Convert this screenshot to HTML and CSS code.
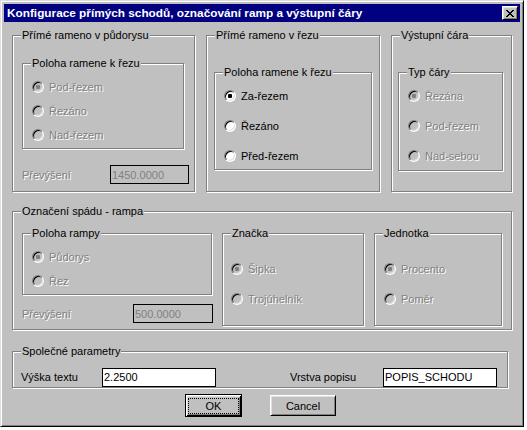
FILE: index.html
```html
<!DOCTYPE html>
<html lang="cs">
<head>
<meta charset="utf-8">
<title>Konfigurace přímých schodů</title>
<link rel="stylesheet" href="styles.css">
</head>
<body>
<div class="window">
  <div class="titlebar">
    <span class="title">Konfigurace přímých schodů, označování ramp a výstupní čáry</span>
    <span class="close">
      <svg width="8" height="7" viewBox="0 0 8 7" shape-rendering="crispEdges">
        <path fill="#000" d="M0 0h2v1h-2zM6 0h2v1h-2zM1 1h2v1h-2zM5 1h2v1h-2zM2 2h4v1h-4zM3 3h2v1h-2zM2 4h4v1h-4zM1 5h2v1h-2zM5 5h2v1h-2zM0 6h2v1h-2zM6 6h2v1h-2z"/>
      </svg>
    </span>
  </div>
  <div class="content">
    <div class="top-row">
      <div class="group g1">
        <span class="group-title">Přímé rameno v půdorysu</span>
        <div class="group sub sub1">
          <span class="group-title">Poloha ramene k řezu</span>
          <div class="radio-row disabled"><span class="radio checked"></span><span>Pod-řezem</span></div>
          <div class="radio-row disabled"><span class="radio"></span><span>Řezáno</span></div>
          <div class="radio-row disabled"><span class="radio"></span><span>Nad-řezem</span></div>
        </div>
        <div class="field-row f1">
          <span class="label disabled-text l1">Převýšení</span>
          <input class="edit edit-disabled e1" type="text" value="1450.0000" readonly>
        </div>
      </div>
      <div class="group g2">
        <span class="group-title">Přímé rameno v řezu</span>
        <div class="group sub sub2">
          <span class="group-title">Poloha ramene k řezu</span>
          <div class="radio-row"><span class="radio checked"></span><span>Za-řezem</span></div>
          <div class="radio-row"><span class="radio"></span><span>Řezáno</span></div>
          <div class="radio-row"><span class="radio"></span><span>Před-řezem</span></div>
        </div>
      </div>
      <div class="group g3">
        <span class="group-title">Výstupní čára</span>
        <div class="group sub sub3">
          <span class="group-title">Typ čáry</span>
          <div class="radio-row disabled"><span class="radio checked"></span><span>Řezána</span></div>
          <div class="radio-row disabled"><span class="radio"></span><span>Pod-řezem</span></div>
          <div class="radio-row disabled"><span class="radio"></span><span>Nad-sebou</span></div>
        </div>
      </div>
    </div>

    <div class="group g4">
      <span class="group-title">Označení spádu - rampa</span>
      <div class="col">
        <div class="group sub sub4">
          <span class="group-title">Poloha rampy</span>
          <div class="radio-row disabled"><span class="radio checked"></span><span>Půdorys</span></div>
          <div class="radio-row disabled"><span class="radio"></span><span>Řez</span></div>
        </div>
        <div class="field-row f2">
          <span class="label disabled-text l2">Převýšení</span>
          <input class="edit edit-disabled e2" type="text" value="500.0000" readonly>
        </div>
      </div>
      <div class="group sub sub5">
        <span class="group-title">Značka</span>
        <div class="radio-row disabled"><span class="radio checked"></span><span>Šipka</span></div>
        <div class="radio-row disabled"><span class="radio"></span><span>Trojúhelník</span></div>
      </div>
      <div class="group sub sub6">
        <span class="group-title">Jednotka</span>
        <div class="radio-row disabled"><span class="radio checked"></span><span>Procento</span></div>
        <div class="radio-row disabled"><span class="radio"></span><span>Poměr</span></div>
      </div>
    </div>

    <div class="group g5">
      <span class="group-title">Společné parametry</span>
      <span class="label l3">Výška textu</span>
      <input class="edit e3" type="text" value="2.2500">
      <span class="label l4">Vrstva popisu</span>
      <input class="edit e4" type="text" value="POPIS_SCHODU">
    </div>

    <div class="buttons">
      <button class="btn default" type="button"><span class="focus">OK</span></button>
      <button class="btn cancel" type="button">Cancel</button>
    </div>
  </div>
</div>
</body>
</html>
```
FILE: styles.css
```css
body {
  margin: 0;
  background: #fff;
  font-family: "Liberation Sans", Arial, sans-serif;
  font-size: 11px;
  color: #000;
}

.window {
  width: 524px;
  height: 427px;
  box-sizing: border-box;
  background: #c0c0c0;
  border: 1px solid;
  border-color: #dfdfdf #000 #000 #dfdfdf;
  box-shadow: inset 1px 1px 0 #fff, inset -1px -1px 0 #808080;
  padding: 3px;
  display: flex;
  flex-direction: column;
}

.titlebar {
  height: 18px;
  flex: none;
  box-sizing: border-box;
  background: #000080;
  color: #fff;
  display: flex;
  align-items: center;
  justify-content: space-between;
  padding: 0 2px 0 3px;
}

.title {
  font-weight: bold;
  font-size: 11.8px;
  white-space: nowrap;
}

.close {
  width: 16px;
  height: 14px;
  box-sizing: border-box;
  background: #c0c0c0;
  border: 1px solid;
  border-color: #fff #000 #000 #fff;
  box-shadow: inset 1px 1px 0 #dfdfdf, inset -1px -1px 0 #808080;
  display: flex;
  align-items: center;
  justify-content: center;
}

.close svg {
  display: block;
  margin: 0 0 0 -1px;
}

.content {
  padding: 13px 0 0 8px;
  display: flex;
  flex-direction: column;
}

.top-row {
  display: flex;
  align-items: flex-start;
}

.group {
  position: relative;
  box-sizing: border-box;
  border: 1px solid #808080;
  box-shadow: 1px 1px 0 #fff, inset 1px 1px 0 #fff;
}

.group-title {
  position: absolute;
  top: -7px;
  left: 8px;
  padding: 0 1px;
  background: #c0c0c0;
  line-height: 13px;
  white-space: nowrap;
}

.sub {
  display: flex;
  flex-direction: column;
  flex: none;
}

.g1 {
  width: 183px;
  height: 157px;
  padding: 27px 0 0 9px;
  display: flex;
  flex-direction: column;
}

.sub1 {
  width: 162px;
  height: 86px;
  padding: 16px 0 0 9px;
  gap: 10px;
}

.g2 {
  width: 174px;
  height: 157px;
  margin-left: 11px;
  padding: 36px 0 0 7px;
}

.sub2 {
  width: 158px;
  height: 98px;
  padding: 16px 0 0 9px;
  gap: 16px;
}

.g3 {
  width: 121px;
  height: 157px;
  margin-left: 11px;
  padding: 36px 0 0 6px;
}

.sub3 {
  width: 105px;
  height: 99px;
  padding: 16px 0 0 9px;
  gap: 16px;
}

.radio-row {
  display: flex;
  align-items: center;
  height: 14px;
  gap: 5px;
  line-height: 14px;
  white-space: nowrap;
}

.radio {
  position: relative;
  flex: none;
  width: 12px;
  height: 12px;
  box-sizing: border-box;
  border-radius: 50%;
  border: 1px solid;
  border-color: #808080 #fff #fff #808080;
  box-shadow: inset 1px 1px 0 #000, inset -1px -1px 0 #dfdfdf;
  background: #fff;
}

.radio.checked::after {
  content: "";
  position: absolute;
  left: 3px;
  top: 3px;
  width: 4px;
  height: 4px;
  border-radius: 1px;
  background: #000;
}

.disabled {
  color: #808080;
  text-shadow: 1px 1px 0 #fff;
}

.disabled .radio {
  background: #c0c0c0;
}

.disabled .radio.checked::after {
  background: #808080;
}

.disabled-text {
  color: #808080;
  text-shadow: 1px 1px 0 #fff;
}

.field-row {
  display: flex;
  align-items: center;
}

.label {
  flex: none;
  white-space: nowrap;
}

.edit {
  flex: none;
  box-sizing: border-box;
  height: 19px;
  margin: 0;
  padding: 0 1px;
  border: 1px solid #000;
  background: #fff;
  font-family: "Liberation Sans", Arial, sans-serif;
  font-size: 11px;
  color: #000;
  outline: none;
}

.edit-disabled {
  background: #c0c0c0;
  color: #808080;
}

.f1 {
  margin-top: 16px;
}

.l1 {
  width: 88px;
}

.e1 {
  width: 79px;
}

.g4 {
  width: 500px;
  height: 119px;
  margin-top: 19px;
  padding: 21px 0 0 9px;
  display: flex;
  align-items: flex-start;
}

.col {
  display: flex;
  flex-direction: column;
  flex: none;
}

.sub4 {
  width: 190px;
  height: 62px;
  padding: 16px 0 0 9px;
  gap: 10px;
}

.f2 {
  margin-top: 9px;
}

.l2 {
  width: 111px;
}

.e2 {
  width: 80px;
}

.sub5 {
  width: 142px;
  height: 93px;
  margin-left: 9px;
  padding: 28px 0 0 8px;
  gap: 16px;
}

.sub6 {
  width: 128px;
  height: 93px;
  margin-left: 10px;
  padding: 28px 0 0 9px;
  gap: 16px;
}

.g5 {
  width: 496px;
  height: 37px;
  margin-top: 21px;
  padding: 15px 0 0 8px;
  display: flex;
  align-items: center;
}

.l3 {
  width: 81px;
}

.e3 {
  width: 114px;
}

.l4 {
  width: 93px;
  margin-left: 74px;
}

.e4 {
  width: 114px;
}

.buttons {
  display: flex;
  align-items: center;
  margin-top: 6px;
  padding-left: 173px;
}

.btn {
  box-sizing: border-box;
  margin: 0;
  padding: 0;
  height: 21px;
  background: #c0c0c0;
  border: 1px solid;
  border-color: #fff #000 #000 #fff;
  box-shadow: inset 1px 1px 0 #dfdfdf, inset -1px -1px 0 #808080;
  font-family: "Liberation Sans", Arial, sans-serif;
  font-size: 11px;
  color: #000;
  display: flex;
  align-items: center;
  justify-content: center;
}

.btn.default {
  width: 57px;
  height: 23px;
  border: 1px solid #000;
  box-shadow: inset 1px 1px 0 #fff, inset -1px -1px 0 #000, inset 2px 2px 0 #dfdfdf, inset -2px -2px 0 #808080;
}

.focus {
  display: flex;
  align-items: center;
  justify-content: center;
  box-sizing: border-box;
  width: 51px;
  height: 16px;
  border: 1px dotted #000;
}

.cancel {
  width: 66px;
  margin-left: 28px;
}
```
